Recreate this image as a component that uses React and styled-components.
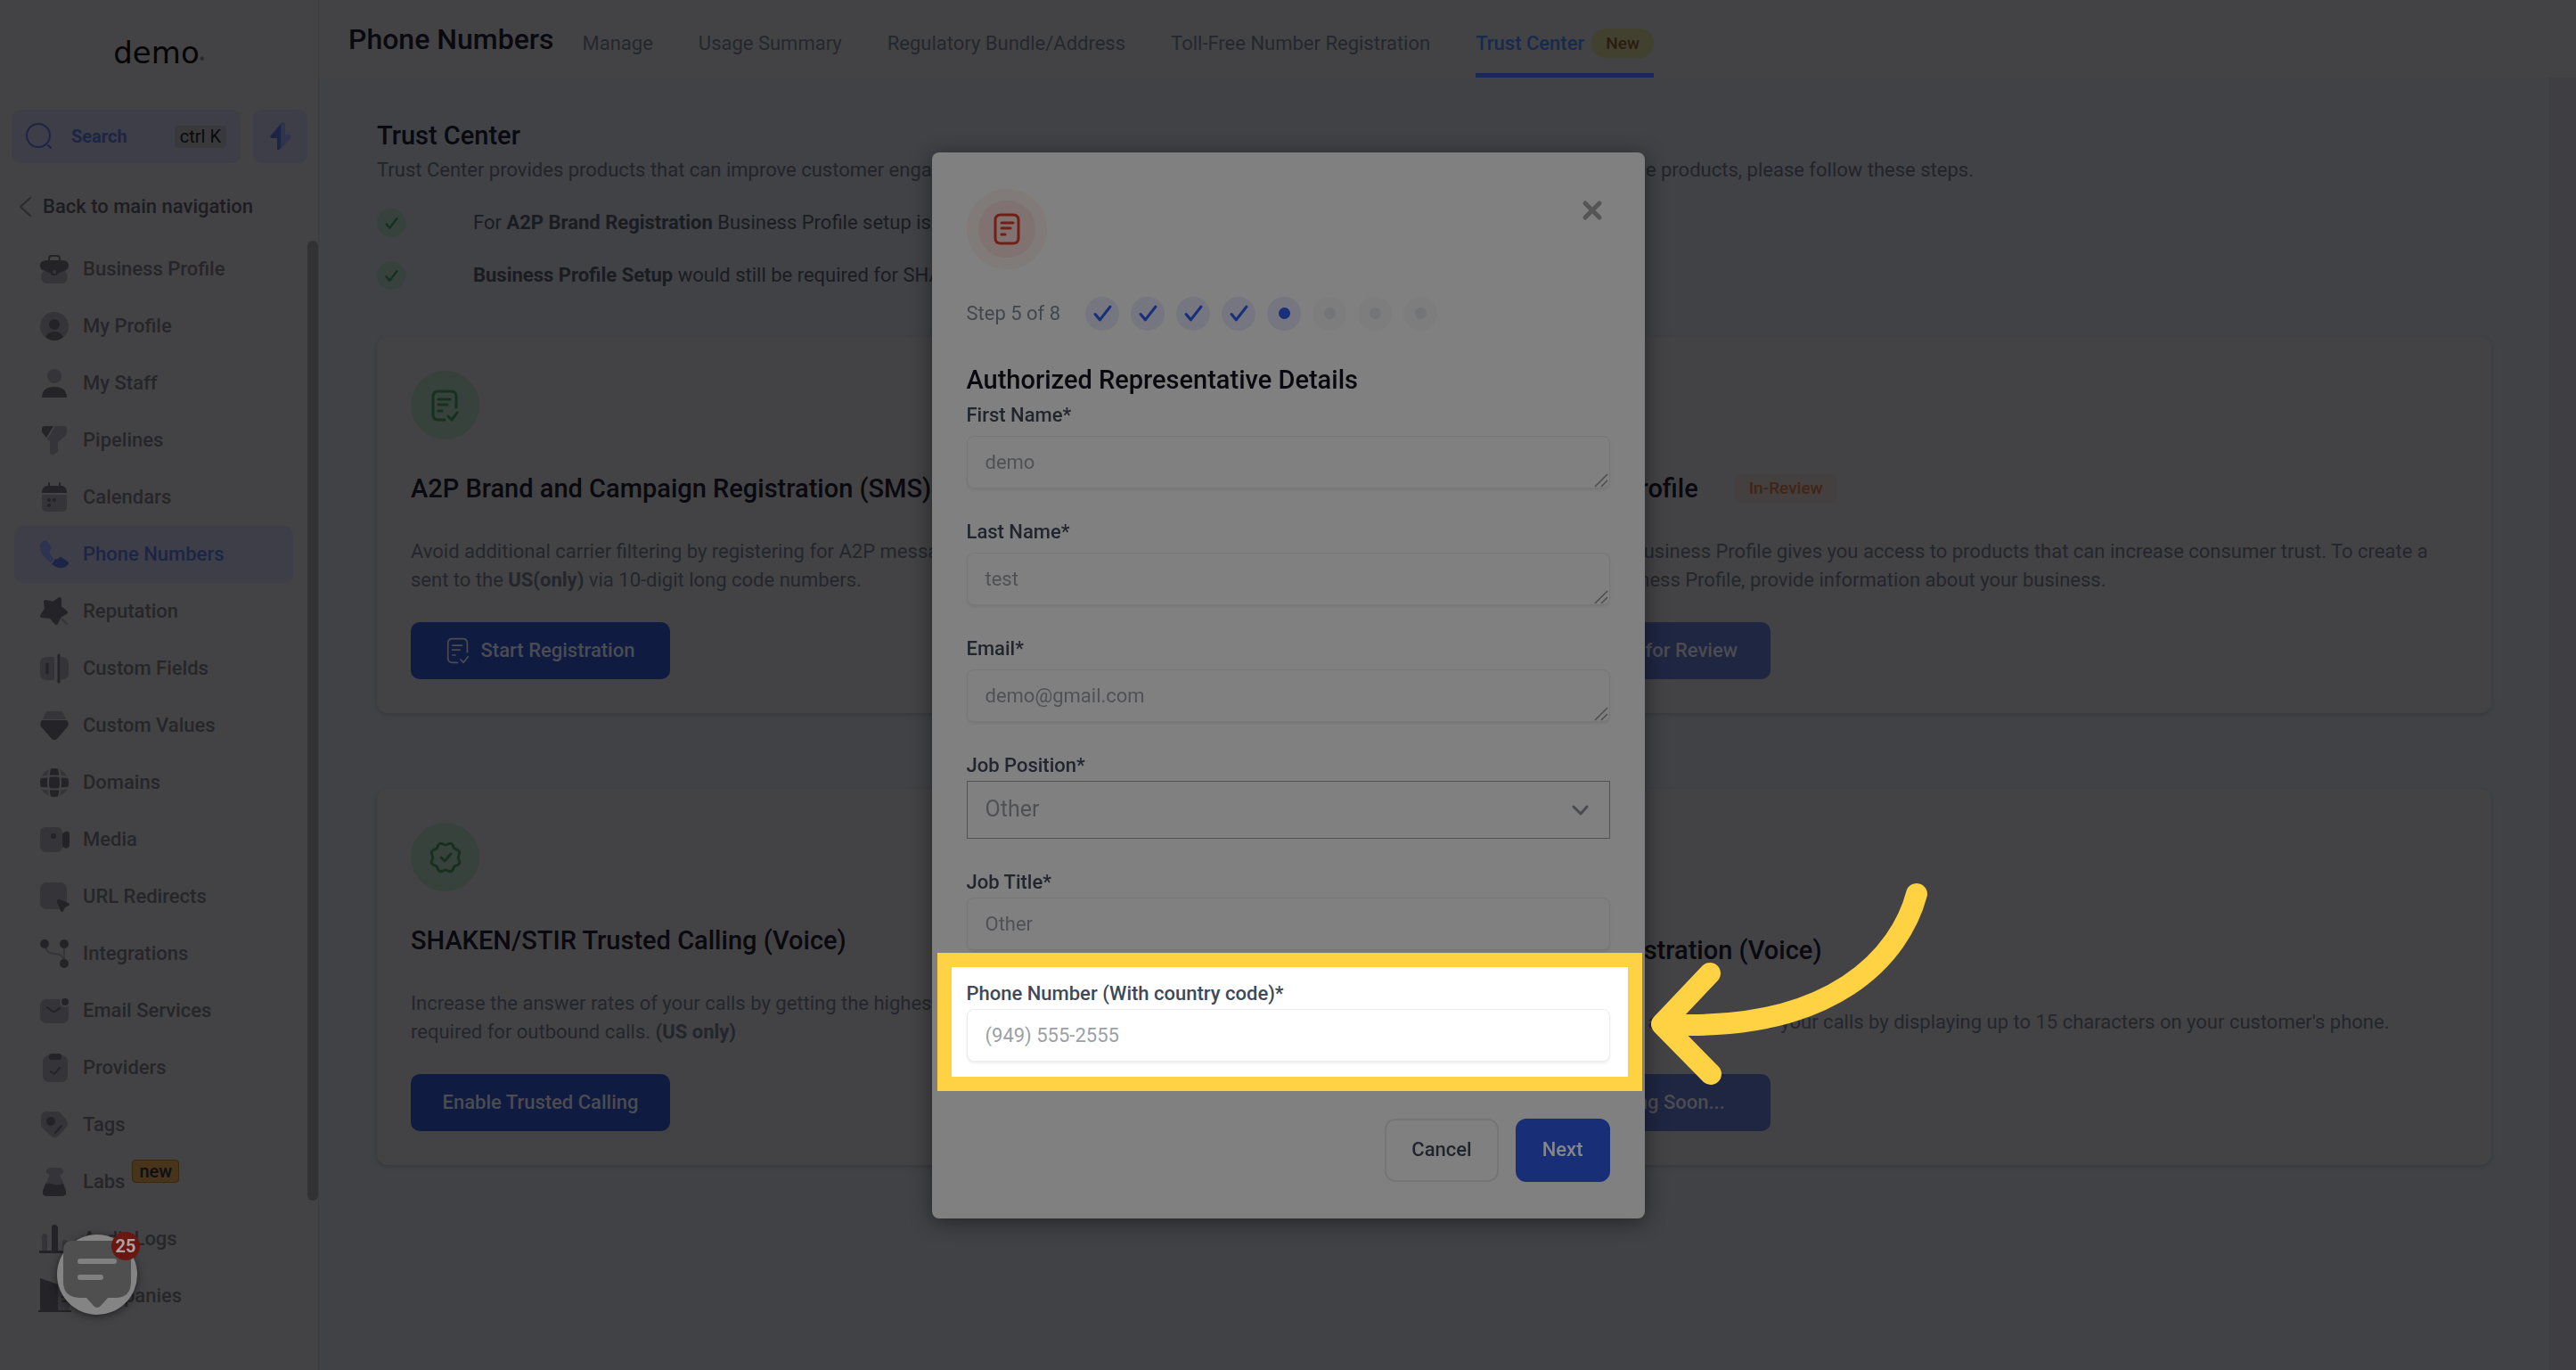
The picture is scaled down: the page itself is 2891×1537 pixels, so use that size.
import React from 'react';
import styled, { createGlobalStyle, css, ThemeProvider } from 'styled-components';

const theme = {
  palette: {
    surface: '#434345',
    canvas: '#404246',
    gutter: '#3e3e43',
    line: '#3c3d42',
    ink: '#09090f',
    text: '#232429',
    muted: '#26262a',
    iconDark: '#232328',
    iconLight: '#353539',
    blue: '#1c2545',
    blueSoft: '#3e3e48',
    button: '#101b42',
    buttonDisabled: '#1f2642',
    green: '#17301f',
    greenSoft: '#38423d',
    modal: '#808080',
    yellow: '#ffd244',
  },
  fontSize: {
    small: '19px',
    base: '22px',
    large: '29px',
    title: '32px',
  },
};

const GlobalStyle = createGlobalStyle`
  *, *::before, *::after { box-sizing: border-box; }
  body {
    margin: 0;
    font-family: Roboto, "Liberation Sans", sans-serif;
    font-size: 22px;
    line-height: 32px;
    background: ${theme.palette.canvas};
    color: ${theme.palette.text};
  }
  h1, h2, h3, p, ul { margin: 0; padding: 0; }
  ul { list-style: none; }
  a { color: inherit; text-decoration: none; }
  button, input, select, textarea { font: inherit; color: inherit; margin: 0; }
  svg { display: block; overflow: visible; flex: none; }
`;

const Layout = styled.div`
  display: flex;
  height: 100vh;
  overflow: hidden;
`;

/* ---------- sidebar ---------- */

const Sidebar = styled.aside`
  display: flex;
  flex-direction: column;
  flex: none;
  width: 358px;
  background: ${({ theme }) => theme.palette.surface};
  border-right: 1px solid ${({ theme }) => theme.palette.line};
`;

const Logo = styled.div`
  display: flex;
  align-items: center;
  justify-content: center;
  height: 123px;
  padding-bottom: 6px;
  font-family: "DejaVu Sans", sans-serif;
  font-size: 34px;
  color: #050506;

  small {
    align-self: center;
    padding-top: 14px;
    font-size: 6px;
  }
`;

const SearchRow = styled.div`
  display: flex;
  gap: 14px;
  padding: 0 12px 0 13px;
`;

const softButton = css`
  display: flex;
  align-items: center;
  border: none;
  border-radius: 10px;
  height: 60px;
  background: ${({ theme }) => theme.palette.blueSoft};
  color: ${({ theme }) => theme.palette.blue};
`;

const SearchButton = styled.button`
  ${softButton}
  flex: 1;
  padding: 0 16px;
  font-size: 20px;
  font-weight: 700;

  span { margin-left: 21px; }
`;

const QuickButton = styled.button`
  ${softButton}
  justify-content: center;
  width: 61px;
  padding: 0;
`;

const Shortcut = styled.kbd`
  margin-left: auto;
  padding: 0 6px;
  border-radius: 4px;
  background: #39393c;
  color: ${({ theme }) => theme.palette.ink};
  font: 400 20px/25px Roboto, sans-serif;
`;

const BackLink = styled.a`
  display: flex;
  align-items: center;
  gap: 13px;
  height: 87px;
  padding: 11px 0 0 22px;
  color: #1d1d21;
  font-weight: 500;
`;

const NavScroll = styled.div`
  display: flex;
  flex: 1;
  min-height: 0;
`;

const NavList = styled.ul`
  flex: 1;
  padding: 0 16px;
  overflow: hidden;
`;

const ScrollThumb = styled.div`
  width: 12px;
  height: 85%;
  border-radius: 6px;
  background: #323234;
`;

const NavLink = styled.a`
  display: flex;
  align-items: center;
  gap: 16px;
  height: 64px;
  padding-left: 29px;
  border-radius: 10px;
  font-weight: 500;
  color: ${({ theme, $active }) => ($active ? theme.palette.blue : theme.palette.muted)};
  background: ${({ theme, $active }) => ($active ? theme.palette.blueSoft : 'transparent')};
`;

const NavBadge = styled.sup`
  align-self: flex-start;
  margin: 7px 0 0 -8px;
  padding: 0 7px;
  border: 1px solid #37290f;
  border-radius: 4px;
  background: #47341a;
  color: #0c1016;
  font-size: 20px;
  line-height: 24px;
`;

/* ---------- page ---------- */

const Main = styled.main`
  display: flex;
  flex-direction: column;
  flex: 1;
  min-width: 0;
`;

const Header = styled.header`
  display: flex;
  height: 87px;
  padding-left: 33px;
  background: ${({ theme }) => theme.palette.surface};
`;

const PageTitle = styled.h1`
  margin-right: 32px;
  color: ${({ theme }) => theme.palette.ink};
  font-size: ${({ theme }) => theme.fontSize.title};
  font-weight: 500;
  line-height: 88px;
`;

const Tabs = styled.nav`
  display: flex;
  gap: 51px;
`;

const Tab = styled.a`
  display: flex;
  align-items: center;
  gap: 8px;
  padding-top: 15px;
  border-bottom: 5px solid ${({ $active }) => ($active ? '#182a55' : 'transparent')};
  color: ${({ $active }) => ($active ? '#172a4e' : '#25272e')};
  font-weight: ${({ $active }) => ($active ? 500 : 400)};
`;

const NewPill = styled.span`
  padding: 0 16px;
  border-radius: 16px;
  background: #42412f;
  color: #2b1c11;
  font-size: ${({ theme }) => theme.fontSize.small};
  line-height: 33px;
`;

const Scroller = styled.div`
  display: flex;
  flex: 1;
  min-height: 0;
`;

const Gutter = styled.div`
  width: 30px;
  border-left: 1px solid ${({ theme }) => theme.palette.line};
  background: ${({ theme }) => theme.palette.gutter};
`;

const Content = styled.div`
  flex: 1;
  min-width: 0;
  padding: 47px 65px 0;
`;

const SectionTitle = styled.h2`
  color: ${({ theme }) => theme.palette.ink};
  font-size: ${({ theme }) => theme.fontSize.large};
  font-weight: 500;
  line-height: 36px;
`;

const Intro = styled.p`
  padding-top: 5px;
  white-space: nowrap;
`;

const Notes = styled.ul`
  display: grid;
  gap: 27px;
  padding: 27px 0 53px;
`;

const Note = styled.li`
  display: flex;
  align-items: center;
  gap: 76px;
  color: #1b1c21;

  b { font-weight: 700; }
`;

const NoteTick = styled.span`
  display: grid;
  place-items: center;
  width: 32px;
  height: 32px;
  border-radius: 50%;
  background: ${({ theme }) => theme.palette.greenSoft};
  color: ${({ theme }) => theme.palette.green};
`;

const Cards = styled.div`
  display: grid;
  grid-template-columns: 1fr 1fr;
  gap: 85px 172px;
`;

/* each pair of products shares one wide panel */
const CardPair = styled.section`
  display: grid;
  grid-column: 1 / -1;
  grid-template-columns: subgrid;
  padding: 38px;
  border-radius: 12px;
  background: ${({ theme }) => theme.palette.surface};
  box-shadow: 0 2px 5px rgba(0, 0, 0, 0.14);
`;

const Card = styled.article`
  display: flex;
  flex-direction: column;
  align-items: flex-start;
  justify-content: space-between;
  gap: 31px;
`;

const CardIcon = styled.div`
  display: grid;
  place-items: center;
  width: 77px;
  height: 77px;
  border-radius: 50%;
  background: ${({ theme }) => theme.palette.greenSoft};
  color: ${({ theme }) => theme.palette.green};
`;

const CardTitle = styled.h3`
  display: flex;
  align-items: center;
  gap: 41px;
  color: ${({ theme }) => theme.palette.ink};
  font-size: ${({ theme }) => theme.fontSize.large};
  font-weight: 500;
  line-height: 48px;
`;

const Status = styled.span`
  padding: 0 16px;
  border-radius: 6px;
  background: #43403f;
  color: #412516;
  font-size: ${({ theme }) => theme.fontSize.small};
  line-height: 32px;
`;

const CardText = styled.p`
  color: #24262d;

  b { font-weight: 700; }
`;

const CardButton = styled.button`
  display: flex;
  align-items: center;
  justify-content: center;
  gap: 13px;
  width: 291px;
  height: 64px;
  border: none;
  border-radius: 10px;
  background: ${({ theme, disabled }) => (disabled ? theme.palette.buttonDisabled : theme.palette.button)};
  color: #4b4c51;
  font-weight: 500;
`;

/* ---------- modal ---------- */

const Backdrop = styled.div`
  position: fixed;
  inset: 0;
  display: flex;
  align-items: center;
  justify-content: center;
`;

const Modal = styled.form`
  width: 800px;
  padding: 41px 39px;
  border-radius: 8px;
  background: ${({ theme }) => theme.palette.modal};
  box-shadow: 0 4px 24px rgba(0, 0, 0, 0.45);
`;

const ModalTop = styled.div`
  display: flex;
  align-items: flex-start;
  justify-content: space-between;
`;

const ModalIcon = styled.div`
  display: grid;
  place-items: center;
  width: 90px;
  height: 90px;
  border: 13px solid #807a79;
  border-radius: 50%;
  background: #7f7271;
  color: #741f15;
`;

const CloseButton = styled.button`
  padding: 13px 9px;
  border: none;
  background: none;
  color: #555555;
`;

const Steps = styled.div`
  display: flex;
  align-items: center;
  gap: 13px;
  padding: 31px 0 37px;
  color: #42474d;

  p { margin-right: 15px; }
`;

const Step = styled.span`
  display: grid;
  place-items: center;
  width: 38px;
  height: 38px;
  border-radius: 50%;
  background: ${({ $pending }) => ($pending ? '#7d7d7e' : '#75767f')};
  color: ${({ $pending }) => ($pending ? '#747576' : '#182f7c')};
`;

const Dot = styled.i`
  width: 13px;
  height: 13px;
  border-radius: 50%;
  background: currentColor;
`;

const Fields = styled.div`
  display: grid;
  gap: 35px;
  padding-top: 8px;
`;

const Field = styled.div`
  display: grid;
  gap: ${({ $tight }) => ($tight ? '3px' : '9px')};

  label {
    color: ${({ $lit }) => ($lit ? '#3f4958' : '#20252e')};
    font-weight: 500;
    line-height: 28px;
  }
`;

const control = css`
  display: block;
  width: 100%;
  height: 59px;
  padding: 0 20px;
  outline: none;
  border: 1px solid ${({ $lit }) => ($lit ? '#ececee' : '#777778')};
  border-radius: 8px;
  background: ${({ $lit }) => ($lit ? '#ffffff' : 'transparent')};
  box-shadow: 0 2px 3px rgba(0, 0, 0, 0.07);
  color: ${({ $lit }) => ($lit ? '#9b9fa7' : '#4f5155')};
`;

const TextInput = styled.input`
  ${control}
`;

const TextArea = styled.textarea`
  ${control}
  padding: 14px 20px;
  line-height: 30px;
  resize: none;
  overflow: hidden;
`;

const SelectInput = styled.select`
  ${control}
  height: 65px;
  border-color: #505254;
  border-radius: 0;
  box-shadow: none;
  font-size: 25px;
  appearance: none;
`;

const ControlWrapper = styled.div`
  position: relative;
`;

const Grip = styled.svg`
  position: absolute;
  right: 3px;
  bottom: 2px;
`;

const Chevron = styled.svg`
  position: absolute;
  right: 24px;
  top: 27px;
`;

const Highlight = styled.div`
  position: relative;
  margin: 3px -36px 31px -33px;
  padding: 16px 20px 17px 17px;
  border: 16px solid ${({ theme }) => theme.palette.yellow};
  background: #ffffff;
`;

const Pointer = styled.svg`
  position: absolute;
  left: calc(100% + 23px);
  top: -96px;
`;

const Actions = styled.div`
  display: flex;
  justify-content: flex-end;
  gap: 19px;
`;

const ActionButton = styled.button`
  height: 71px;
  padding: 0 28px;
  border: 2px solid ${({ $primary }) => ($primary ? '#182f77' : '#757576')};
  border-radius: 12px;
  background: ${({ $primary }) => ($primary ? '#182f77' : 'transparent')};
  color: ${({ $primary }) => ($primary ? '#85868a' : '#1f252e')};
  font-weight: 500;
`;

/* ---------- chat launcher ---------- */

const Launcher = styled.button`
  position: fixed;
  left: 64px;
  bottom: 62px;
  width: 90px;
  height: 90px;
  padding: 0;
  border: none;
  border-radius: 50%;
  background: #848484;
  box-shadow: 0 2px 10px rgba(0, 0, 0, 0.5);
`;

const LauncherCount = styled.span`
  position: absolute;
  top: -3px;
  right: -3px;
  width: 32px;
  border-radius: 50%;
  background: #6a1611;
  color: #a9a3a3;
  font-size: 20px;
  font-weight: 700;
  line-height: 32px;
  text-align: center;
`;

/* ---------- icons ---------- */

const D = theme.palette.iconDark;
const L = theme.palette.iconLight;
const BG = theme.palette.surface;

const navIcons = {
  briefcase: (
    <>
      <path d="M4 18h24l3 5q0 9-7 9H8q-7 0-7-9z" fill={L} />
      <rect x="10" y="1" width="12" height="10" rx="3" fill="none" stroke={D} strokeWidth="2" />
      <path d="M7 6h18q7 0 7 6 0 4-3 5l-10 4h-6L3 17q-3-1-3-5 0-6 7-6z" fill={D} />
      <rect x="12" y="16" width="8" height="7" rx="3" fill={D} />
      <rect x="14" y="17" width="4" height="4" rx="1" fill={L} />
    </>
  ),
  profile: (
    <>
      <circle cx="16" cy="16" r="16" fill={L} />
      <circle cx="16" cy="14" r="6" fill={D} />
      <path d="M6 28q3-6 10-6t10 6q-4 4-10 4T6 28z" fill={D} />
    </>
  ),
  staff: (
    <>
      <circle cx="16" cy="8" r="8" fill={L} />
      <path d="M2 32v-1q1-11 14-11t14 11v1z" fill={D} />
    </>
  ),
  funnel: (
    <>
      <path d="M5 0h10L7 13 3 8Q2 7 2 5V3q0-3 3-3z" fill={D} />
      <path d="M17 0h10q3 0 3 3v4q0 2-2 4l-8 7v9q0 2-3 4-6 3-6-2V18q0-2-3-3z" fill={L} />
    </>
  ),
  calendar: (
    <>
      <path d="M2 13h28v13q0 6-6 6H8q-6 0-6-6z" fill={L} />
      <path d="M2 10q0-6 6-7h16q6 1 6 7v1H2z" fill={D} />
      <path d="M10 0v4M22 0v4" stroke={D} strokeWidth="2" strokeLinecap="round" />
      <g fill={D}><circle cx="10" cy="19" r="2" /><circle cx="16" cy="19" r="2" /><circle cx="10" cy="25" r="2" /></g>
    </>
  ),
  phone: (
    <>
      <path d="M3 1q4-2 6 1l4 7-3 4q2 4 5 8l-3 4Q0 17 0 7q0-4 3-6z" fill="#2d3350" />
      <path d="M13 27l4-6q3 1 4-1 2-2 4 0l6 4q2 2 0 4-7 7-18-1z" fill="#1c2545" />
    </>
  ),
  star: (
    <>
      <path d="M6 5l9 2 7-5v9l7 6-7 4-4 8-6-7-10-1 5-8z" fill={D} stroke={D} strokeWidth="4" strokeLinejoin="round" />
      <path d="M25 25l5 5" stroke={L} strokeWidth="2" strokeLinecap="round" />
    </>
  ),
  fields: (
    <>
      <path d="M16 3v26H7q-7-1-7-7V10q0-6 7-7zM23 3q9 0 9 7v12q0 6-9 7z" fill={L} />
      <path d="M21 1v30M8 11v10" stroke={D} strokeWidth="3" strokeLinecap="round" />
    </>
  ),
  gem: (
    <>
      <path d="M3 9l3-7q1-2 3-2h14q2 0 3 2l3 7z" fill={L} />
      <path d="M2 10h28q3 4 1 7L19 31q-3 2-6 0L1 17q-2-3 1-7z" fill={D} />
    </>
  ),
  globe: (
    <>
      <circle cx="16" cy="16" r="16" fill={L} />
      <path d="M1 11h30q2 5 0 10H1q-2-5 0-10z" fill={D} />
      <path d="M11 1q5-2 10 0v30q-5 2-10 0z" fill={D} />
      <path d="M11 0q-4 16 0 32M21 0q4 16 0 32M0 10q16-3 32 0M0 22q16 3 32 0" fill="none" stroke={BG} strokeWidth="2" />
    </>
  ),
  media: (
    <>
      <rect x="0" y="2" width="25" height="28" rx="6" fill={L} />
      <path d="M25 9q6-5 8 0v14q-2 5-8 1z" fill={D} />
      <circle cx="15" cy="12" r="3" fill={D} />
    </>
  ),
  redirect: (
    <>
      <rect x="0" y="0" width="30" height="30" rx="7" fill={L} />
      <path d="M21 19l11 4q2 2 0 3l-4 2-2 4q-2 2-3 0l-4-10q-1-3 2-3z" fill={D} />
    </>
  ),
  integrations: (
    <>
      <path d="M5 6q2 10 11 10 10 0 11 8M27 5v20" fill="none" stroke={L} strokeWidth="2" />
      <g fill={D}><circle cx="5" cy="5" r="5" /><circle cx="27" cy="5" r="5" /><circle cx="27" cy="27" r="5" /></g>
    </>
  ),
  email: (
    <>
      <rect x="0" y="3" width="32" height="27" rx="7" fill={L} />
      <path d="M8 12l5 4q3 2 5 0l4-3" fill="none" stroke={D} strokeWidth="2" strokeLinecap="round" />
      <circle cx="28" cy="6" r="5" fill={D} stroke={BG} strokeWidth="2" />
    </>
  ),
  clipboard: (
    <>
      <rect x="3" y="2" width="28" height="30" rx="7" fill={L} />
      <rect x="10" y="0" width="14" height="7" rx="3" fill={D} />
      <path d="M12 20l4 3 6-7" fill="none" stroke={D} strokeWidth="2" strokeLinecap="round" />
    </>
  ),
  tag: (
    <>
      <path d="M7 1h12q2 0 4 2l7 8q2 4 0 7L20 29q-4 3-7 0L4 21q-3-3-3-6V6q1-5 6-5z" fill={L} />
      <circle cx="12" cy="12" r="5" fill={D} />
      <path d="M17 25l7-8" stroke={D} strokeWidth="2" strokeLinecap="round" />
    </>
  ),
  flask: (
    <>
      <path d="M10 0h12q4 1 4 4t-4 4l5 11H6L11 8q-4-1-4-4t3-4z" fill={L} />
      <path d="M6 18q5-1 10 1 5 1 10-1l3 8q1 6-5 6H8q-6 0-5-6z" fill={D} />
    </>
  ),
  chart: (
    <>
      <path d="M2 13q0-3 3-3t3 3v16H2zM25 20q0-3 3-3t3 3v9h-6z" fill={L} />
      <path d="M13 3q0-3 3-3t4 3v26h-7zM-1 29h34v3H-1z" fill={D} />
    </>
  ),
  building: (
    <>
      <path d="M20 5h13v27H20z" fill={L} />
      <path d="M0-4l20 7v30H0z" fill={D} />
      <path d="M-2 33h37M24 17h7M24 22h7" stroke={D} strokeWidth="2" />
    </>
  ),
};

const NavIcon = ({ name }) => (
  <svg width="32" height="32" viewBox="0 0 32 32" aria-hidden="true">{navIcons[name]}</svg>
);

const strokeProps = {
  fill: 'none',
  stroke: 'currentColor',
  strokeLinecap: 'round',
  strokeLinejoin: 'round',
  'aria-hidden': true,
};

const DocCheckIcon = ({ width = 31, height = 36, strokeWidth = 3 }) => (
  <svg width={width} height={height} viewBox="0 0 31 36" strokeWidth={strokeWidth} {...strokeProps}>
    <path d="M15 34H8q-6 0-6-6V8q0-6 6-6h14q6 0 6 6v12M8 11h13M8 17h10M8 24h4M19 30l4 4 6-8" />
  </svg>
);

const DocIcon = () => (
  <svg width="30" height="36" viewBox="0 0 30 36" strokeWidth="3" {...strokeProps}>
    <path d="M8 2h14q6 0 6 6v20q0 6-6 6H8q-6 0-6-6V8q0-6 6-6zM9 11h13M9 17h10M9 24h4" />
  </svg>
);

const sealPath = Array.from({ length: 96 }, (_, i) => {
  const angle = (i / 96) * Math.PI * 2;
  const r = 15.5 - 1.3 * Math.cos(angle * 8);
  return `${i ? 'L' : 'M'}${(18 + r * Math.sin(angle)).toFixed(1)} ${(18 - r * Math.cos(angle)).toFixed(1)}`;
}).join('') + 'z';

const SealIcon = () => (
  <svg width="36" height="36" viewBox="0 0 36 36" strokeWidth="3" {...strokeProps}>
    <path d={sealPath} />
    <path d="M13 18l4 4 7-8" />
  </svg>
);

const TickIcon = ({ size = 20 }) => (
  <svg width={size} height={size} viewBox="0 0 20 20" strokeWidth="3" {...strokeProps}>
    <path d="M2 11l5 6L18 3" />
  </svg>
);

/* ---------- data ---------- */

const navItems = [
  ['Business Profile', 'briefcase'],
  ['My Profile', 'profile'],
  ['My Staff', 'staff'],
  ['Pipelines', 'funnel'],
  ['Calendars', 'calendar'],
  ['Phone Numbers', 'phone'],
  ['Reputation', 'star'],
  ['Custom Fields', 'fields'],
  ['Custom Values', 'gem'],
  ['Domains', 'globe'],
  ['Media', 'media'],
  ['URL Redirects', 'redirect'],
  ['Integrations', 'integrations'],
  ['Email Services', 'email'],
  ['Providers', 'clipboard'],
  ['Tags', 'tag'],
  ['Labs', 'flask'],
  ['Audit Logs', 'chart'],
  ['Companies', 'building'],
];

const tabs = ['Manage', 'Usage Summary', 'Regulatory Bundle/Address', 'Toll-Free Number Registration'];

function AreaField({ id, label, value }) {
  return (
    <Field>
      <label htmlFor={id}>{label}</label>
      <ControlWrapper>
        <TextArea id={id} name={id} rows={1} defaultValue={value} />
        <Grip width="14" height="14" viewBox="0 0 14 14" stroke="#4c4c4e" strokeWidth="1.5" aria-hidden="true">
          <path d="M0 14L14 0M7 14l7-7" />
        </Grip>
      </ControlWrapper>
    </Field>
  );
}

function SideNav() {
  return (
    <Sidebar>
      <Logo>demo<small>®</small></Logo>
      <SearchRow>
        <SearchButton type="button">
          <svg width="30" height="30" viewBox="0 0 30 30" strokeWidth="2" {...strokeProps}>
            <circle cx="14" cy="14" r="13" />
            <path d="M25 25l3 3" />
          </svg>
          <span>Search</span>
          <Shortcut>ctrl K</Shortcut>
        </SearchButton>
        <QuickButton type="button" aria-label="Quick actions">
          <svg width="24" height="32" viewBox="0 0 24 32" aria-hidden="true">
            <path d="M12 2q4-4 5 0v12h5q3 1 1 4L12 30z" fill="#30344d" />
            <path d="M12 2v27q-3 4-4 1V18H2q-3-1-1-3z" fill="#1c2545" />
          </svg>
        </QuickButton>
      </SearchRow>
      <BackLink href="#main">
        <svg width="13" height="22" viewBox="0 0 13 22" strokeWidth="2" {...strokeProps} stroke="#2b2b2e">
          <path d="M12 1L1 11l11 10" />
        </svg>
        Back to main navigation
      </BackLink>
      <NavScroll>
        <NavList>
          {navItems.map(([label, icon]) => (
            <li key={label}>
              <NavLink href={`#${icon}`} $active={label === 'Phone Numbers'}>
                <NavIcon name={icon} />
                {label}
                {label === 'Labs' && <NavBadge>new</NavBadge>}
              </NavLink>
            </li>
          ))}
        </NavList>
        <ScrollThumb />
      </NavScroll>
    </Sidebar>
  );
}

function Products() {
  return (
    <Cards>
      <CardPair>
        <Card>
          <CardIcon><DocCheckIcon /></CardIcon>
          <CardTitle>A2P Brand and Campaign Registration (SMS)</CardTitle>
          <CardText>
            Avoid additional carrier filtering by registering for A2P messaging. This is mandatory for all messages
            being sent to the <b>US(only)</b> via 10-digit long code numbers.
          </CardText>
          <CardButton type="button"><DocCheckIcon width={26} height={30} strokeWidth={2} />Start Registration</CardButton>
        </Card>
        <Card>
          <CardIcon><DocCheckIcon /></CardIcon>
          <CardTitle>Business Profile <Status>In-Review</Status></CardTitle>
          <CardText>
            Completing a Business Profile gives you access to products that can increase consumer trust. To create a
            Customer Business Profile, provide information about your business.
          </CardText>
          <CardButton type="button" disabled><DocCheckIcon width={26} height={30} strokeWidth={2} />Submit for Review</CardButton>
        </Card>
      </CardPair>
      <CardPair>
        <Card>
          <CardIcon><SealIcon /></CardIcon>
          <CardTitle>SHAKEN/STIR Trusted Calling (Voice)</CardTitle>
          <CardText>
            Increase the answer rates of your calls by getting the highest level of caller attestation. This step is
            currently required for outbound calls. <b>(US only)</b>
          </CardText>
          <CardButton type="button">Enable Trusted Calling</CardButton>
        </Card>
        <Card>
          <CardIcon><SealIcon /></CardIcon>
          <CardTitle>CNAM Registration (Voice)</CardTitle>
          <CardText>
            Add your brand as the caller to your calls by displaying up to 15 characters on your customer's phone.
          </CardText>
          <CardButton type="button" disabled><DocCheckIcon width={26} height={30} strokeWidth={2} />Coming Soon...</CardButton>
        </Card>
      </CardPair>
    </Cards>
  );
}

function RepresentativeModal() {
  return (
    <Backdrop>
      <Modal role="dialog" aria-labelledby="modal-title" onSubmit={(e) => e.preventDefault()}>
        <ModalTop>
          <ModalIcon><DocIcon /></ModalIcon>
          <CloseButton type="button" aria-label="Close">
            <svg width="22" height="22" viewBox="0 0 22 22" strokeWidth="5" {...strokeProps}>
              <path d="M3 3l16 16M19 3L3 19" />
            </svg>
          </CloseButton>
        </ModalTop>
        <Steps>
          <p>Step 5 of 8</p>
          {[1, 2, 3, 4, 5, 6, 7, 8].map((step) => (
            <Step key={step} $pending={step > 5}>
              {step < 5 ? <TickIcon size={21} /> : <Dot />}
            </Step>
          ))}
        </Steps>
        <SectionTitle id="modal-title">Authorized Representative Details</SectionTitle>
        <Fields>
          <AreaField id="firstName" label="First Name*" value="demo" />
          <AreaField id="lastName" label="Last Name*" value="test" />
          <AreaField id="email" label="Email*" value="demo@gmail.com" />
          <Field $tight>
            <label htmlFor="jobPosition">Job Position*</label>
            <ControlWrapper>
              <SelectInput id="jobPosition" name="jobPosition" defaultValue="Other">
                <option>Other</option>
                <option>Director</option>
                <option>CEO</option>
              </SelectInput>
              <Chevron width="19" height="11" viewBox="0 0 19 11" strokeWidth="3" {...strokeProps} stroke="#4a4c50">
                <path d="M2 2l8 8 7-8" />
              </Chevron>
            </ControlWrapper>
          </Field>
          <Field $tight>
            <label htmlFor="jobTitle">Job Title*</label>
            <TextInput id="jobTitle" name="jobTitle" defaultValue="Other" />
          </Field>
        </Fields>
        <Highlight>
          <Field $tight $lit>
            <label htmlFor="phone">Phone Number (With country code)*</label>
            <TextInput id="phone" name="phone" type="tel" defaultValue="(949) 555-2555" $lit />
          </Field>
          <Pointer width="320" height="230" viewBox="0 0 320 230" strokeWidth="24" {...strokeProps} stroke={theme.palette.yellow}>
            <path d="M301 14C283 81 210 171 15 160M69 103L15 160l55 56" />
          </Pointer>
        </Highlight>
        <Actions>
          <ActionButton type="button">Cancel</ActionButton>
          <ActionButton type="submit" $primary>Next</ActionButton>
        </Actions>
      </Modal>
    </Backdrop>
  );
}

export default function App() {
  return (
    <ThemeProvider theme={theme}>
      <GlobalStyle />
      <Layout>
        <SideNav />
        <Main>
          <Header>
            <PageTitle>Phone Numbers</PageTitle>
            <Tabs>
              {tabs.map((tab) => <Tab key={tab} href="#tab">{tab}</Tab>)}
              <Tab href="#trust" $active>Trust Center <NewPill>New</NewPill></Tab>
            </Tabs>
          </Header>
          <Scroller>
            <Content>
              <SectionTitle>Trust Center</SectionTitle>
              <Intro>
                Trust Center provides products that can improve customer engagement by helping you build trust with
                your customers. To get access to all of these products, please follow these steps.
              </Intro>
              <Notes>
                <Note>
                  <NoteTick><TickIcon size={15} /></NoteTick>
                  <span>For <b>A2P Brand Registration</b> Business Profile setup is not required.</span>
                </Note>
                <Note>
                  <NoteTick><TickIcon size={15} /></NoteTick>
                  <span><b>Business Profile Setup</b> would still be required for SHAKEN/STIR and CNAM.</span>
                </Note>
              </Notes>
              <Products />
            </Content>
            <Gutter />
          </Scroller>
        </Main>
      </Layout>
      <RepresentativeModal />
      <Launcher type="button" aria-label="Open chat">
        <svg width="90" height="90" viewBox="0 0 90 90" aria-hidden="true">
          <path d="M18 7h54q11 0 11 11v35q0 18-18 18h-8l-8 9q-4 4-8 0l-8-9h-8Q7 70 7 53V18Q7 7 18 7z" fill="#4f4f4f" />
          <path d="M26 30h38M26 48h23" stroke="#808080" strokeWidth="6" strokeLinecap="round" />
        </svg>
        <LauncherCount>25</LauncherCount>
      </Launcher>
    </ThemeProvider>
  );
}
